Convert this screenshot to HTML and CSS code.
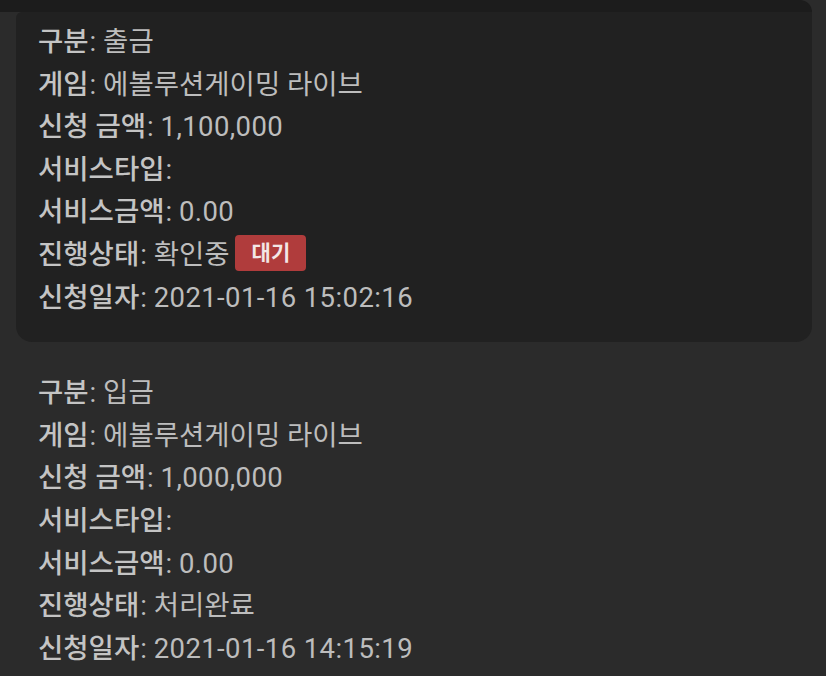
FILE: index.html
```html
<!DOCTYPE html>
<html lang="ko">
<head>
<meta charset="utf-8">
<link rel="stylesheet" href="styles.css">
</head>
<body>
<div class="topbar"></div>
<div class="list">
  <div class="item active">
    <div class="row"><span class="label">구분</span><span class="colon">:</span> 출금</div>
    <div class="row"><span class="label">게임</span><span class="colon">:</span> 에볼루션게이밍 라이브</div>
    <div class="row"><span class="label">신청 금액</span><span class="colon">:</span> <span class="num">1,100,000</span></div>
    <div class="row"><span class="label">서비스타입</span><span class="colon">:</span></div>
    <div class="row"><span class="label">서비스금액</span><span class="colon">:</span> <span class="num">0.00</span></div>
    <div class="row"><span class="label">진행상태</span><span class="colon">:</span> 확인중 <span class="badge">대기</span></div>
    <div class="row"><span class="label">신청일자</span><span class="colon">:</span> <span class="num">2021-01-16 15:02:16</span></div>
  </div>
  <div class="item">
    <div class="row"><span class="label">구분</span><span class="colon">:</span> 입금</div>
    <div class="row"><span class="label">게임</span><span class="colon">:</span> 에볼루션게이밍 라이브</div>
    <div class="row"><span class="label">신청 금액</span><span class="colon">:</span> <span class="num">1,000,000</span></div>
    <div class="row"><span class="label">서비스타입</span><span class="colon">:</span></div>
    <div class="row"><span class="label">서비스금액</span><span class="colon">:</span> <span class="num">0.00</span></div>
    <div class="row"><span class="label">진행상태</span><span class="colon">:</span> 처리완료</div>
    <div class="row"><span class="label">신청일자</span><span class="colon">:</span> <span class="num">2021-01-16 14:15:19</span></div>
  </div>
</div>
</body>
</html>
```
FILE: styles.css
```css
html, body {
  margin: 0;
  padding: 0;
  background: #2b2b2b;
  height: 676px;
  overflow: hidden;
}
body {
  font-family: Roboto, "Noto Sans CJK KR", sans-serif;
  font-size: 27.5px;
  color: #bdbdbd;
}
.topbar {
  height: 12px;
  margin-right: 14px;
  background: #1c1c1c;
  border-top-right-radius: 12px;
}
.list {
  display: flex;
  flex-direction: column;
}
.item {
  margin: 0 14px 0 16px;
  padding: 9px 22px 23px;
}
.item.active {
  background: #212121;
  border-radius: 6px 0 16px 16px;
}
.item + .item {
  padding-top: 30px;
}
.row {
  height: 42.6px;
  line-height: 42.6px;
  white-space: nowrap;
}
.label {
  font-weight: 500;
  color: #c4c4c4;
}
.colon {
  font-weight: 400;
  margin-left: 1px;
}
.num {
  letter-spacing: 0.4px;
}
.badge {
  display: inline-block;
  vertical-align: middle;
  position: relative;
  top: -4px;
  text-align: center;
  background: #b03c3c;
  color: #f3e6e6;
  font-size: 21px;
  font-weight: 700;
  height: 36px;
  line-height: 36px;
  width: 71px;
  border-radius: 4px;
  margin-left: -1px;
}
```
